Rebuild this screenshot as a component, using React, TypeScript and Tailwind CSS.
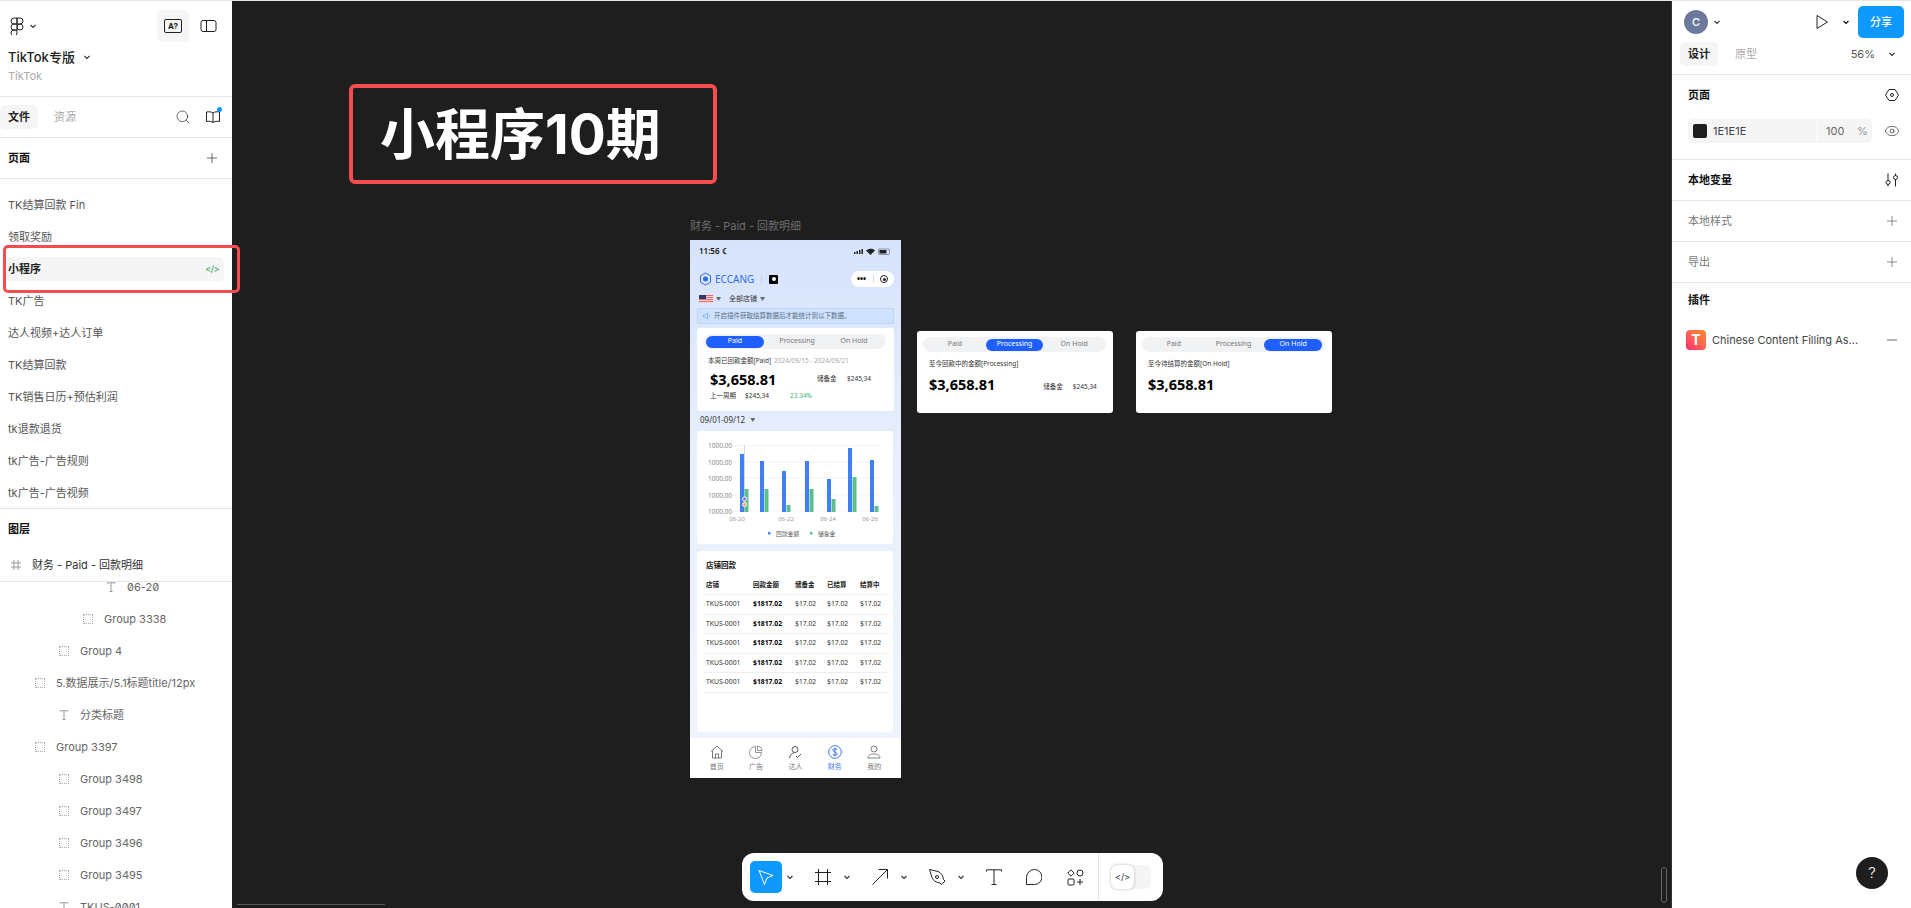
import { Eye, Minus, Plus, Search } from 'lucide-react';
import type { ReactNode } from 'react';

const pages = [
  'TK结算回款 Fin',
  '领取奖励',
  '小程序',
  'TK广告',
  '达人视频+达人订单',
  'TK结算回款',
  'TK销售日历+预估利润',
  'tk退款退货',
  'tk广告-广告规则',
  'tk广告-广告视频',
];

const layers = [
  { name: '06-20', indent: 'pl-[106px]', text: true },
  { name: 'Group 3338', indent: 'pl-[83px]', text: false },
  { name: 'Group 4', indent: 'pl-[59px]', text: false },
  { name: '5.数据展示/5.1标题title/12px', indent: 'pl-[35px]', text: false },
  { name: '分类标题', indent: 'pl-[59px]', text: true },
  { name: 'Group 3397', indent: 'pl-[35px]', text: false },
  { name: 'Group 3498', indent: 'pl-[59px]', text: false },
  { name: 'Group 3497', indent: 'pl-[59px]', text: false },
  { name: 'Group 3496', indent: 'pl-[59px]', text: false },
  { name: 'Group 3495', indent: 'pl-[59px]', text: false },
  { name: 'TKUS-0001', indent: 'pl-[59px]', text: true },
];

const blueTops = [454, 461, 471, 461, 479, 448, 460];
const greenTops = [489, 489, 505, 489, 499, 477, 506];
const blueXs = [740, 760, 782, 805, 827, 848, 870];

function Svg({ size = 16, children }: { size?: number; children: ReactNode }) {
  return (
    <svg width={size} height={size} viewBox="0 0 16 16" fill="none" stroke="#222" strokeWidth="1" className="shrink-0">
      {children}
    </svg>
  );
}

function Chevron({ className = 'text-[#333]' }: { className?: string }) {
  return (
    <svg width="8" height="8" viewBox="0 0 8 8" fill="none" stroke="currentColor" strokeWidth="1.1" className={`shrink-0 ${className}`}>
      <path d="M1.5 3 L4 5.5 L6.5 3" />
    </svg>
  );
}

function FigmaLogo() {
  return (
    <svg width="14" height="18" viewBox="0 0 14 18" fill="none" stroke="#222" strokeWidth="1" className="shrink-0">
      <path d="M7 1H4a3 3 0 0 0 0 6h3zM7 1h3a3 3 0 0 1 0 6H7zM7 7H4a3 3 0 0 0 0 6h3zM7 13H4a3 3 0 1 0 3 3z" />
      <circle cx="10" cy="10" r="3" />
    </svg>
  );
}

function LayerIcon({ text }: { text: boolean }) {
  if (text) {
    return (
      <svg width="10" height="10" viewBox="0 0 10 10" fill="none" stroke="#999" strokeWidth="1" className="shrink-0">
        <path d="M1 1.5V.8h8v.7M5 .8v8.7M3.5 9.5h3" />
      </svg>
    );
  }
  return <span className="size-[10px] shrink-0 border border-dotted border-[#aaa]" />;
}

function Divider() {
  return <div className="h-px shrink-0 bg-[#e6e6e6]" />;
}

function PropertyRow({ label, muted, icon }: { label: string; muted?: boolean; icon: ReactNode }) {
  return (
    <div className="flex h-[40px] shrink-0 items-center justify-between pl-[16px] pr-[11px]">
      <span className={`text-[11px] ${muted ? 'text-[#777]' : 'font-semibold text-[#111]'}`}>{label}</span>
      {icon}
    </div>
  );
}

function LeftPanel() {
  return (
    <aside className="flex h-full w-[232px] shrink-0 flex-col bg-white">
      <div className="flex h-[42px] shrink-0 items-end justify-between pl-[10px] pr-[15px]">
        <div className="flex items-center gap-[5px] pb-[7px]">
          <FigmaLogo />
          <Chevron />
        </div>
        <div className="flex items-center gap-[11px]">
          <div className="flex size-[32px] items-center justify-center rounded-[5px] bg-[#f5f5f5]">
            <span className="flex h-[14px] w-[18px] items-center justify-center rounded-[2px] border border-[#222] text-[8px] font-bold leading-none text-[#222]">A?</span>
          </div>
          <svg width="17" height="14" viewBox="0 0 17 14" fill="none" stroke="#222" strokeWidth="1">
            <rect x="1" y="1.5" width="15" height="11" rx="2" />
            <path d="M6.5 1.5v11" />
          </svg>
        </div>
      </div>
      <div className="flex h-[24px] shrink-0 items-end gap-[8px] pl-[8px]">
        <span className="text-[13px] font-medium leading-[18px] text-[#222]">TikTok专版</span>
        <Chevron className="mb-[5px] text-[#333]" />
      </div>
      <div className="h-[30px] shrink-0 pl-[8px] pt-[2px] text-[11px] leading-[16px] text-[#aaa]">TikTok</div>
      <Divider />
      <div className="flex h-[40px] shrink-0 items-center justify-between pr-[11px]">
        <div className="flex items-center gap-[16px]">
          <span className="flex h-[24px] w-[38px] items-center justify-center rounded-[5px] bg-[#f5f5f5] text-[11px] font-semibold text-[#222]">文件</span>
          <span className="text-[11px] text-[#aaa]">资源</span>
        </div>
        <div className="flex items-center gap-[14px] text-[#222]">
          <Search size={16} strokeWidth={1} />
          <div className="relative">
            <svg width="16" height="14" viewBox="0 0 16 14" fill="none" stroke="#222" strokeWidth="1">
              <path d="M8 3C6.5 1.8 4 1.5 1.5 2v9.5c2.5-.5 5-.2 6.5 1 1.5-1.2 4-1.5 6.5-1V2C12 1.5 9.5 1.8 8 3zM8 3v9.5" />
            </svg>
            <span className="absolute -right-[1px] -top-[3px] size-[5px] rounded-full bg-[#0d99ff]" />
          </div>
        </div>
      </div>
      <Divider />
      <div className="flex h-[40px] shrink-0 items-center justify-between pl-[8px] pr-[12px]">
        <span className="text-[11px] font-semibold text-[#111]">页面</span>
        <Plus size={16} strokeWidth={1} className="text-[#222]" />
      </div>
      <Divider />
      <div className="flex h-[329px] shrink-0 flex-col pt-[10px]">
        {pages.map((page) => (
          <div
            key={page}
            className={
              page === '小程序'
                ? 'flex h-[32px] shrink-0 items-center pl-[2px] pr-[8px]'
                : 'flex h-[32px] shrink-0 items-center pl-[8px] text-[11px] text-[#555]'
            }
          >
            {page === '小程序' ? (
              <div className="flex h-[24px] w-full items-center justify-between rounded-[5px] bg-[#f5f5f5] pl-[6px] pr-[5px]">
                <span className="text-[11px] font-semibold text-[#222]">{page}</span>
                <span className="text-[9px] tracking-[-0.5px] text-[#1fa35a]">&lt;/&gt;</span>
              </div>
            ) : (
              page
            )}
          </div>
        ))}
      </div>
      <Divider />
      <div className="flex h-[40px] shrink-0 items-center pl-[8px] text-[11px] font-semibold text-[#111]">图层</div>
      <div className="flex h-[32px] shrink-0 items-center gap-[11px] pl-[11px] text-[11px] text-[#333]">
        <svg width="10" height="10" viewBox="0 0 10 10" fill="none" stroke="#999" strokeWidth="1" className="shrink-0">
          <path d="M3 0v10M7 0v10M0 3h10M0 7h10" />
        </svg>
        <span>财务 - Paid - 回款明细</span>
      </div>
      <Divider />
      <div className="min-h-0 flex-1 overflow-hidden">
        {layers.map((layer) => (
          <div
            key={layer.name}
            className={`flex h-[32px] items-center gap-[11px] text-[11px] text-[#666] slashed-zero first:h-[21px] first:items-start first:leading-[11px] ${layer.indent}`}
          >
            <LayerIcon text={layer.text} />
            <span className="whitespace-nowrap">{layer.name}</span>
          </div>
        ))}
      </div>
    </aside>
  );
}

function RightPanel() {
  return (
    <aside className="flex h-full w-[240px] shrink-0 flex-col border-l border-[#333] bg-white">
      <div className="flex h-[42px] shrink-0 items-start justify-between pl-[12px] pr-[7px] pt-[6px]">
        <div className="flex items-center gap-[5px] pt-[4px]">
          <span className="flex size-[24px] items-center justify-center rounded-full bg-[#6b7a9c] text-[11px] font-medium text-white">C</span>
          <Chevron />
        </div>
        <div className="flex items-center">
          <svg width="14" height="16" viewBox="0 0 14 16" fill="none" stroke="#222" strokeWidth="1" className="mr-[13px]">
            <path d="M2 1.5 L12.5 8 L2 14.5 Z" strokeLinejoin="round" />
          </svg>
          <Chevron className="mr-[8px]" />
          <span className="flex h-[32px] w-[46px] items-center justify-center rounded-[5px] bg-[#0d99ff] text-[11px] font-medium text-white">分享</span>
        </div>
      </div>
      <div className="flex h-[32px] shrink-0 items-start justify-between pl-[8px] pr-[15px]">
        <div className="flex items-center gap-[17px]">
          <span className="flex h-[24px] w-[38px] items-center justify-center rounded-[5px] bg-[#f5f5f5] text-[11px] font-semibold text-[#222]">设计</span>
          <span className="text-[11px] text-[#aaa]">原型</span>
        </div>
        <div className="flex h-[24px] items-center gap-[13px]">
          <span className="text-[11px] text-[#555]">56%</span>
          <Chevron />
        </div>
      </div>
      <Divider />
      <PropertyRow
        label="页面"
        icon={
          <Svg>
            <path d="M5 2.5h6L14.5 8 11 13.5H5L1.500 8z" />
            <circle cx="8" cy="8" r="1.5" />
          </Svg>
        }
      />
      <div className="flex h-[44px] shrink-0 items-start justify-between pl-[16px] pr-[11px] pt-[4px]">
        <div className="flex h-[24px] w-[184px] items-center rounded-[5px] bg-[#f5f5f5] text-[11px]">
          <span className="ml-[5px] size-[14px] rounded-[2px] bg-[#1e1e1e]" />
          <span className="ml-[6px] w-[104px] text-[#444]">1E1E1E</span>
          <span className="h-[24px] w-px bg-white" />
          <span className="ml-[8px] w-[31px] text-[#666]">100</span>
          <span className="text-[#999]">%</span>
        </div>
        <Eye size={16} strokeWidth={1} className="mt-[4px] text-[#222]" />
      </div>
      <Divider />
      <PropertyRow
        label="本地变量"
        icon={
          <Svg>
            <path d="M4 1.5v7M4 12.5v2M11.5 1.5v2M11.5 7.5v7" />
            <circle cx="4" cy="10.5" r="2" />
            <circle cx="11.5" cy="5.5" r="2" />
          </Svg>
        }
      />
      <Divider />
      <PropertyRow label="本地样式" muted icon={<Plus size={16} strokeWidth={1} className="text-[#555]" />} />
      <Divider />
      <PropertyRow label="导出" muted icon={<Plus size={16} strokeWidth={1} className="text-[#555]" />} />
      <Divider />
      <div className="flex h-[34px] shrink-0 items-center pl-[16px] text-[11px] font-semibold text-[#111]">插件</div>
      <div className="flex h-[46px] shrink-0 items-center justify-between pl-[14px] pr-[11px]">
        <div className="flex items-center gap-[6px]">
          <span className="flex size-[20px] items-center justify-center rounded-[4px] bg-gradient-to-bl from-[#ff8a1f] to-[#ff1f6b] text-[14px] font-bold leading-none text-white">T</span>
          <span className="text-[11px] text-[#444]">Chinese Content Filling As...</span>
        </div>
        <Minus size={16} strokeWidth={1} className="text-[#222]" />
      </div>
    </aside>
  );
}

function Tabs({ active, compact }: { active: string; compact?: boolean }) {
  const widths: Record<string, string> = { Paid: 'w-[58px]', Processing: 'w-[58px]', 'On Hold': compact ? 'w-[48px]' : 'w-[58px]' };
  return (
    <div className={`flex h-[15px] w-[183px] items-center rounded-full bg-[#f1f2f4] px-[3px] ${compact ? 'gap-[4px]' : 'gap-[2px]'}`}>
      {['Paid', 'Processing', 'On Hold'].map((tab) => (
        <span
          key={tab}
          className={`flex h-[12px] items-center justify-center rounded-full text-[7px] ${widths[tab]} ${tab === active ? 'bg-[#1f5fff] text-white' : 'text-[#777]'}`}
        >
          {tab}
        </span>
      ))}
    </div>
  );
}

function StandaloneCard({ active, label, reserve, left }: { active: string; label: string; reserve?: boolean; left: string }) {
  return (
    <div className={`absolute top-[331px] flex h-[82px] w-[196px] flex-col rounded-[3px] bg-white px-[6px] pt-[6px] font-['Noto_Sans','Noto_Sans_CJK_SC',sans-serif] ${left}`}>
      <Tabs active={active} />
      <div className="mt-[7px] pl-[6px] text-[6.5px] leading-[10px] text-[#333]">{label}</div>
      <div className="mt-[5px] flex items-end pl-[6px]">
        <span className="text-[14.5px] font-bold leading-[20px] text-black">$3,658.81</span>
        {reserve && (
          <span className="ml-[48px] flex gap-[10px] pb-[1px] text-[6.5px] leading-[12px] text-[#333]">
            <span>储备金</span>
            <span>$245,34</span>
          </span>
        )}
      </div>
    </div>
  );
}

function Chart() {
  const ys = [445.5, 462, 478, 495, 511];
  const labels = [
    { x: 737, t: '06-20' },
    { x: 786, t: '06-22' },
    { x: 828, t: '06-24' },
    { x: 870, t: '06-26' },
  ];
  // coordinates below are in screenshot pixels, the card starts at 697,431
  return (
    <svg width="196" height="113" viewBox="697 431 196 113" className="block">
      {ys.map((y) => (
        <line key={y} x1="733" x2="881" y1={y} y2={y} stroke="#f2f3f5" strokeWidth="1" />
      ))}
      {ys.map((y) => (
        <text key={y} x="708" y={y + 2.5} fontSize="6.5" fill="#8b8b8b">1000.00</text>
      ))}
      <line x1="744.5" x2="744.5" y1="445" y2="512" stroke="#c9c9c9" strokeWidth="0.7" />
      {blueXs.map((x, i) => (
        <g key={x}>
          <rect x={x} y={blueTops[i]} width="4" height={512 - blueTops[i]} fill="#4080f5" />
          <rect x={x + 4.5} y={greenTops[i]} width="4" height={512 - greenTops[i]} fill="#5cc08d" />
        </g>
      ))}
      <circle cx="744.5" cy="499" r="2" fill="#8b5cf6" stroke="#fff" />
      <circle cx="744.5" cy="504.5" r="2" fill="#f59e42" stroke="#fff" />
      {labels.map((l) => (
        <text key={l.t} x={l.x} y="521" fontSize="6" fill="#9a9a9a" textAnchor="middle">{l.t}</text>
      ))}
      <rect x="768" y="532" width="2.5" height="2.5" fill="#4080f5" />
      <text x="776" y="535.5" fontSize="5.8" fill="#555">回款金额</text>
      <rect x="810" y="532" width="2.5" height="2.5" fill="#5cc08d" />
      <text x="818" y="535.5" fontSize="5.8" fill="#555">储备金</text>
    </svg>
  );
}

function ShopTable() {
  return (
    <div className="ml-[7px] mt-[7px] h-[181px] w-[196px] shrink-0 rounded-[4px] bg-white pl-[7px] pr-[4px]">
      <div className="flex h-[20px] items-end pl-[2px] text-[7.5px] font-semibold leading-[12px] text-[#111]">店铺回款</div>
      <div className="flex h-[24px] items-end border-b border-[#eee] pb-[4px] text-[6.5px] font-semibold leading-[10px] text-[#222]">
        <span className="w-[49px] pl-[2px]">店铺</span>
        <span className="w-[42px]">回款金额</span>
        <span className="w-[32px]">储备金</span>
        <span className="w-[33px]">已结算</span>
        <span>结算中</span>
      </div>
      {[0, 1, 2, 3, 4].map((row) => (
        <div key={row} className="flex h-[19.5px] items-center border-b border-[#eee] text-[6.8px] text-[#333]">
          <span className="w-[49px] pl-[2px]">TKUS-0001</span>
          <span className="w-[42px] font-bold text-black">$1817.02</span>
          <span className="w-[32px]">$17.02</span>
          <span className="w-[33px]">$17.02</span>
          <span>$17.02</span>
        </div>
      ))}
    </div>
  );
}

function BottomNav() {
  return (
    <div className="mt-[6px] flex h-[40px] shrink-0 justify-around bg-white px-[7px] pt-[7px] text-[7px] leading-[10px] text-[#777]">
      <div className="flex w-[30px] flex-col items-center gap-[3px]">
        <svg width="14" height="14" viewBox="0 0 14 14" fill="none" stroke="#555" strokeWidth="0.8">
          <path d="M1 6.5 7 1l6 5.5M2.5 5.5V13h9V5.5M5.5 13V9h3v4" />
        </svg>
        <span>首页</span>
      </div>
      <div className="flex w-[30px] flex-col items-center gap-[3px]">
        <svg width="14" height="14" viewBox="0 0 14 14" fill="none" stroke="#777" strokeWidth="0.8">
          <path d="M6.5 1.5a6 6 0 1 0 6 6h-6z" />
          <path d="M8.5 1a5 5 0 0 1 4.5 4.5H8.500z" />
        </svg>
        <span>广告</span>
      </div>
      <div className="flex w-[30px] flex-col items-center gap-[3px]">
        <svg width="14" height="14" viewBox="0 0 14 14" fill="none" stroke="#444" strokeWidth="0.9">
          <circle cx="7" cy="4.5" r="3" />
          <path d="M1.5 13c.5-3 2.5-5 4.5-5M8 11l1.5 1.5L13 9" />
        </svg>
        <span>达人</span>
      </div>
      <div className="flex w-[30px] flex-col items-center gap-[3px] text-[#3b74f6]">
        <svg width="14" height="14" viewBox="0 0 14 14" fill="none" stroke="#2a62f0" strokeWidth="0.9">
          <circle cx="7" cy="7" r="6.3" />
          <path d="M9 5c-.3-.9-1-1.3-2-1.3S5 4.2 5 5.2 6 6.600 7 7s2 .9 2 1.900-1 1.500-2 1.500-1.800-.5-2-1.400M7 2.800v8.400" />
        </svg>
        <span>财务</span>
      </div>
      <div className="flex w-[30px] flex-col items-center gap-[3px]">
        <svg width="14" height="14" viewBox="0 0 14 14" fill="none" stroke="#666" strokeWidth="0.8">
          <circle cx="7" cy="4" r="3" />
          <path d="M1 13c0-2.5 2-4 6-4s6 1.5 6 4z" />
        </svg>
        <span>我的</span>
      </div>
    </div>
  );
}

function Phone() {
  return (
    <div className="absolute left-[458px] top-[240px] flex h-[538px] w-[211px] flex-col overflow-hidden bg-gradient-to-b from-[#d6e3fc] via-[#e8eefc] via-40% to-[#f1f5ff] font-['Noto_Sans','Noto_Sans_CJK_SC',sans-serif]">
      <div className="flex h-[22px] shrink-0 items-center justify-between pl-[9px] pr-[10px]">
        <span className="text-[8px] font-semibold text-[#111]">11:56 ☾</span>
        <svg width="37" height="7" viewBox="0 0 37 7" fill="#222">
          <rect x="0" y="4" width="1.5" height="2" />
          <rect x="2.5" y="3" width="1.5" height="3" />
          <rect x="5" y="2" width="1.5" height="4" />
          <rect x="7.5" y="1" width="1.5" height="5" />
          <path d="M12 2.5 C15 0 19 0 21 2.5 L16.5 7z" />
          <rect x="24.5" y="1" width="11" height="5.5" rx="1" fill="none" stroke="#444" strokeWidth="0.5" />
          <rect x="25.5" y="2" width="7" height="3.5" />
        </svg>
      </div>
      <div className="mt-[9px] flex h-[16px] shrink-0 items-center justify-between pl-[9px] pr-[7px]">
        <div className="flex items-center">
          <svg width="13" height="14" viewBox="0 0 13 14" fill="none" className="mr-[3px]">
            <path d="M6.5 1 11.5 3.8v6.4L6.5 13l-5-2.8V3.8z" stroke="#2f6bf0" strokeWidth="1" />
            <circle cx="6.5" cy="7" r="2.5" fill="#2f6bf0" />
          </svg>
          <span className="text-[10px] leading-none text-[#2f6bf0]">ECCANG</span>
          <span className="ml-[7px] h-[9px] w-px bg-[#c5d3ee]" />
          <span className="ml-[7px] flex size-[9px] items-center justify-center rounded-[1px] bg-black">
            <span className="size-[4px] rounded-full bg-white" />
          </span>
        </div>
        <div className="flex h-[16px] w-[43px] items-center justify-between rounded-full bg-white px-[6px]">
          <span className="text-[8px] font-bold leading-none text-black">•••</span>
          <span className="h-[8px] w-px bg-[#ddd]" />
          <span className="flex size-[8px] items-center justify-center rounded-full border border-[#222]">
            <span className="size-[3px] rounded-full bg-[#222]" />
          </span>
        </div>
      </div>
      <div className="mt-[6px] flex h-[12px] shrink-0 items-center pl-[9px] text-[7px] text-[#333]">
        <span className="relative h-[8px] w-[14px] bg-[repeating-linear-gradient(180deg,#e06b6b_0,#e06b6b_1px,#f5d5d5_1px,#f5d5d5_2px)]">
          <span className="absolute left-0 top-0 h-[4px] w-[7px] bg-[#2b3a6b]" />
        </span>
        <span className="ml-[3px] text-[5px] text-[#666]">▼</span>
        <span className="ml-[8px]">全部店铺</span>
        <span className="ml-[3px] text-[5px] text-[#666]">▼</span>
      </div>
      <div className="mx-[7px] mt-[3px] flex h-[16px] shrink-0 items-center rounded-[2px] border border-[#bcd5f8] bg-[#cfe2fd] pl-[5px] text-[6.5px] text-[#5a6b85]">
        <svg width="8" height="8" viewBox="0 0 8 8" fill="none" stroke="#6da5f2" strokeWidth="0.7" className="mr-[3px]">
          <path d="M.5 3v2h1.5L4.5 7V1L2 3zM6 2.5c.6 1 .6 2 0 3" />
        </svg>
        开启插件获取结算数据后才能统计到以下数据。
      </div>
      <div className="mx-[7px] mt-[4px] h-[83px] shrink-0 rounded-[3px] bg-white pl-[6px] pt-[6px]">
        <Tabs active="Paid" compact />
        <div className="mt-[7px] flex items-center gap-[3px] pl-[5px] text-[6.5px] leading-[10px]">
          <span className="text-[#333]">本周已回款金额[Paid]</span>
          <span className="text-[#aaa]">2024/09/15 - 2024/09/21</span>
        </div>
        <div className="mt-[3px] flex items-center pl-[7px]">
          <span className="w-[107px] text-[14.5px] font-bold leading-[20px] text-black">$3,658.81</span>
          <span className="w-[30px] text-[6.5px] text-[#333]">储备金</span>
          <span className="text-[6.5px] text-[#333]">$245,34</span>
        </div>
        <div className="mt-[2px] flex items-center pl-[7px] text-[6.5px] leading-[10px] text-[#333]">
          <span className="w-[35px]">上一周期</span>
          <span className="w-[45px]">$245,34</span>
          <span className="text-[#3cb873]">23.34%</span>
        </div>
      </div>
      <div className="mt-[3px] flex h-[12px] shrink-0 items-center gap-[5px] pl-[10px] text-[8px] text-[#333]">
        <span>09/01-09/12</span>
        <span className="text-[5px] text-[#666]">▼</span>
      </div>
      <div className="ml-[7px] mt-[5px] h-[113px] w-[196px] shrink-0 overflow-hidden rounded-[3px] bg-white">
        <Chart />
      </div>
      <ShopTable />
      <BottomNav />
    </div>
  );
}

function Toolbar() {
  return (
    <div className="absolute bottom-[7px] left-[510px] flex h-[48px] w-[421px] items-center rounded-[12px] bg-white pl-[8px] text-[#222]">
      <span className="flex size-[32px] items-center justify-center rounded-[5px] bg-[#0d99ff]">
        <svg width="18" height="18" viewBox="0 0 18 18" fill="none" stroke="#fff" strokeWidth="1" strokeLinejoin="round">
          <path d="M2 2.5 L16 7.5 L10 10 L7.5 16.5 Z" />
        </svg>
      </span>
      <span className="ml-[4px] w-[22px]"><Chevron /></span>
      <span className="ml-[7px] w-[24px]">
        <svg width="16" height="16" viewBox="0 0 16 16" fill="none" stroke="#222" strokeWidth="1">
          <path d="M3.5 0v16M12.5 0v16M0 3.5h16M0 12.5h16" />
        </svg>
      </span>
      <span className="w-[33px] pl-[4px]"><Chevron /></span>
      <span className="w-[24px]">
        <svg width="16" height="16" viewBox="0 0 16 16" fill="none" stroke="#222" strokeWidth="1">
          <path d="M.5 15.5 15.5.5M6.5.5h9v9" />
        </svg>
      </span>
      <span className="w-[33px] pl-[4px]"><Chevron /></span>
      <span className="w-[24px]">
        <svg width="17" height="17" viewBox="0 0 17 17" fill="none" stroke="#222" strokeWidth="1" strokeLinejoin="round">
          <path d="M.5.5 9 2.5c3 1 5 4 5.5 8L16 12l-3.5 3.5-1.5-1.500c-4-.5-7-2.500-8-5.500z" />
          <circle cx="8" cy="8" r="1.5" />
        </svg>
      </span>
      <span className="w-[33px] pl-[4px]"><Chevron /></span>
      <span className="w-[40px]">
        <svg width="16" height="16" viewBox="0 0 16 16" fill="none" stroke="#222" strokeWidth="1">
          <path d="M.5 2.5V.8h15v1.7M8 .8v14.7M5.5 15.5h5" />
        </svg>
      </span>
      <span className="w-[41px]">
        <svg width="16" height="16" viewBox="0 0 16 16" fill="none" stroke="#222" strokeWidth="1">
          <path d="M8.5.5a7 7 0 0 1 0 15H.5V8.5a8 8 0 0 1 8-8z" />
        </svg>
      </span>
      <span className="w-[31px]">
        <svg width="17" height="17" viewBox="0 0 17 17" fill="none" stroke="#222" strokeWidth="1">
          <path d="M4 .8 7.2 4 4 7.2.8 4z" />
          <circle cx="13" cy="4" r="3" />
          <rect x="1" y="10" width="6" height="6" rx="1" />
          <path d="M13 10v6M10 13h6" />
        </svg>
      </span>
      <span className="h-[48px] w-px bg-[#e6e6e6]" />
      <span className="ml-[12px] flex h-[24px] w-[40px] rounded-[6px] bg-[#f5f5f5]">
        <span className="flex h-[24px] w-[23px] items-center justify-center rounded-[6px] bg-white text-[9px] text-[#333] shadow-[0_0_3px_rgba(0,0,0,0.3)]">&lt;/&gt;</span>
      </span>
    </div>
  );
}

function Canvas() {
  return (
    <main className="relative h-full min-w-0 flex-1 overflow-hidden bg-[#1e1e1e]">
      <div className="absolute left-[117px] top-[84px] flex h-[100px] w-[368px] items-center rounded-[6px] border-4 border-[#f54d4d] pl-[27px]">
        <span className="text-[55px] font-bold leading-none text-white">小程序10期</span>
      </div>
      <div className="absolute left-[458px] top-[218px] text-[11px] leading-[16px] text-[#6e6e6e]">财务 - Paid - 回款明细</div>
      <Phone />
      <StandaloneCard left="left-[685px]" active="Processing" label="至今回款中的金额[Processing]" reserve />
      <StandaloneCard left="left-[904px]" active="On Hold" label="至今待结算的金额[On Hold]" />
      <Toolbar />
      <div className="absolute bottom-[5px] right-[4px] h-[36px] w-[6px] rounded-full border border-[#666]" />
      <div className="absolute bottom-[3px] left-[5px] h-px w-[148px] bg-[#555]" />
    </main>
  );
}

export default function App() {
  return (
    <div className="relative flex h-[908px] w-[1911px] overflow-hidden bg-white font-['Inter','Noto_Sans_CJK_SC',sans-serif]">
      <LeftPanel />
      <Canvas />
      <RightPanel />
      <div className="absolute inset-x-0 top-0 h-px bg-[#e6e6e6]" />
      <div className="absolute left-[3px] top-[245px] h-[48px] w-[237px] rounded-[5px] border-[3.5px] border-[#f54d4d]" />
      <span className="absolute bottom-[19px] right-[23px] flex size-[32px] items-center justify-center rounded-full bg-[#1e1e1e] text-[15px] font-light text-white">?</span>
    </div>
  );
}
